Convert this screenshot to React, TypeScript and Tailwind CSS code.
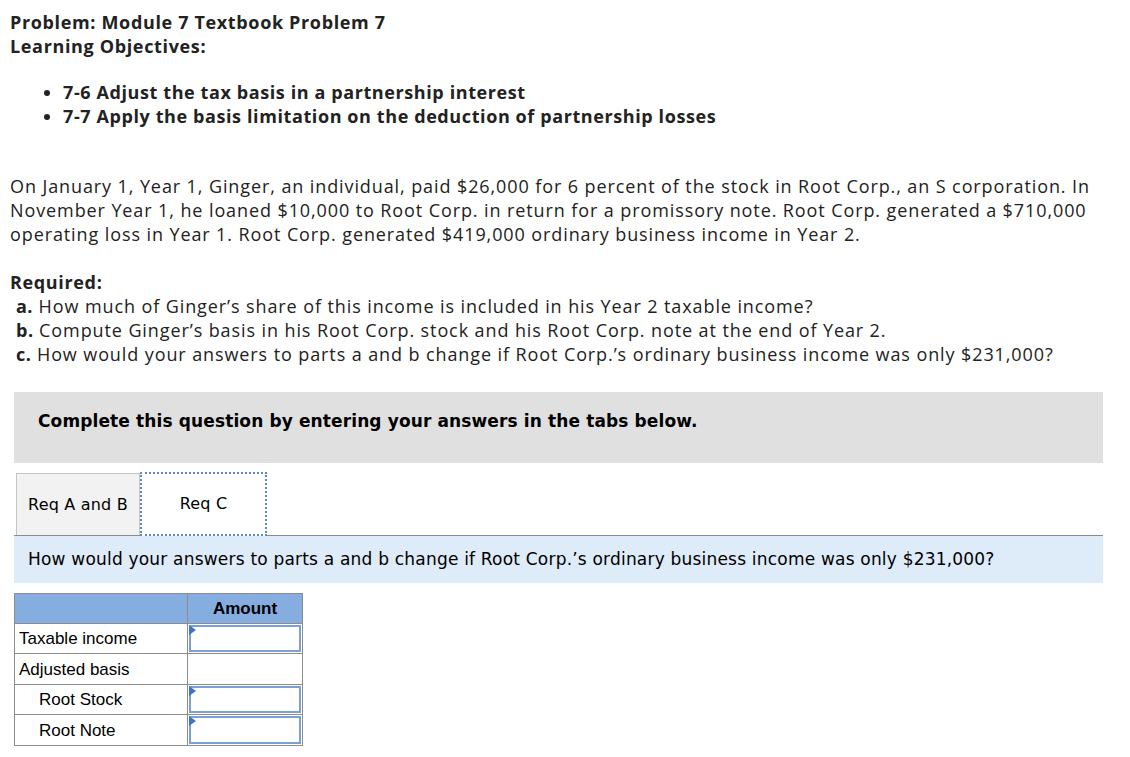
import React from "react";

const top = { fontFamily: "'Open Sans', Lato, sans-serif" };
const verd = { fontFamily: "'DejaVu Sans', Verdana, sans-serif" };
const arial = { fontFamily: "'Liberation Sans', Arial, sans-serif" };

function InputCell() {
  return (
    <td className="border border-[#8c8c8c] p-0 h-[30px] w-[115px] relative">
      <div className="absolute inset-[1px] border-2 border-[#7ba0d4] bg-white" />
      <div className="absolute left-[1px] top-[1px] w-0 h-0 border-t-[5px] border-b-[5px] border-l-[7px] border-t-transparent border-b-transparent border-l-[#3d76c8]" />
    </td>
  );
}

export default function App() {
  return (
    <div className="bg-white w-[1130px] h-[757px] text-[#222] overflow-hidden">
      <div className="pl-[10px] pt-[10px] text-[18px] leading-[24px] tracking-[0.9px] whitespace-nowrap" style={top}>
        <div className="font-bold tracking-[0.65px]">Problem: Module 7 Textbook Problem 7</div>
        <div className="font-bold tracking-[0.65px]">Learning Objectives:</div>
        <ul className="mt-[22px] pl-[53px] list-disc font-bold tracking-[0.6px]">
          <li>7-6 Adjust the tax basis in a partnership interest</li>
          <li>7-7 Apply the basis limitation on the deduction of partnership losses</li>
        </ul>
        <p className="mt-[46px]">
          On January 1, Year 1, Ginger, an individual, paid $26,000 for 6 percent of the stock in Root Corp., an S corporation. In
          <br />
          November Year 1, he loaned $10,000 to Root Corp. in return for a promissory note. Root Corp. generated a $710,000
          <br />
          operating loss in Year 1. Root Corp. generated $419,000 ordinary business income in Year 2.
        </p>
        <div className="mt-[24px] font-bold tracking-[0.65px]">Required:</div>
        <div className="pl-[6px]">
          <div><span className="font-bold tracking-[0.5px]">a.</span> How much of Ginger’s share of this income is included in his Year 2 taxable income?</div>
          <div><span className="font-bold tracking-[0.5px]">b.</span> Compute Ginger’s basis in his Root Corp. stock and his Root Corp. note at the end of Year 2.</div>
          <div><span className="font-bold tracking-[0.5px]">c.</span> How would your answers to parts a and b change if Root Corp.’s ordinary business income was only $231,000?</div>
        </div>
      </div>

      <div className="ml-[14px] mt-[26px] w-[1089px] h-[71px] bg-[#e0e0e0] pl-[24px] pt-[17px] text-[17px] tracking-[0.12px] font-bold text-black" style={verd}>
        Complete this question by entering your answers in the tabs below.
      </div>

      <div className="ml-[14px] mt-[10px] w-[1089px]" style={verd}>
        <div className="flex items-end h-[63px] border-b border-[#8c8c8c] pl-[2px]">
          <div className="w-[124px] h-[62px] bg-[#f2f2f2] border border-b-0 border-[#c6c6c6] flex items-center justify-center text-[16px] tracking-[0.2px] text-black">
            Req A and B
          </div>
          <div className="w-[127px] h-[64px] bg-white border-2 border-dotted border-[#5b86c7] flex items-center justify-center text-[16px] tracking-[0.2px] text-black -mb-px">
            Req C
          </div>
        </div>
        <div className="h-[47px] bg-[#deebf8] flex items-center pl-[14px] text-[17px] tracking-[0.2px] text-black">
          How would your answers to parts a and b change if Root Corp.’s ordinary business income was only $231,000?
        </div>
      </div>

      <table className="ml-[14px] mt-[10px] border-collapse text-[17px] text-black" style={arial}>
        <tbody>
          <tr className="bg-[#86ade0]">
            <td className="border border-[#8c8c8c] w-[173px] h-[30px]" />
            <td className="border border-[#8c8c8c] w-[115px] h-[30px] text-center font-bold leading-none">Amount</td>
          </tr>
          <tr>
            <td className="border border-[#8c8c8c] h-[30px] pl-[4px] leading-none">Taxable income</td>
            <InputCell />
          </tr>
          <tr>
            <td className="border border-[#8c8c8c] h-[31px] pl-[4px] leading-none">Adjusted basis</td>
            <td className="border border-[#8c8c8c]" />
          </tr>
          <tr>
            <td className="border border-[#8c8c8c] h-[30px] pl-[24px] leading-none">Root Stock</td>
            <InputCell />
          </tr>
          <tr>
            <td className="border border-[#8c8c8c] h-[31px] pl-[24px] leading-none">Root Note</td>
            <InputCell />
          </tr>
        </tbody>
      </table>
    </div>
  );
}
